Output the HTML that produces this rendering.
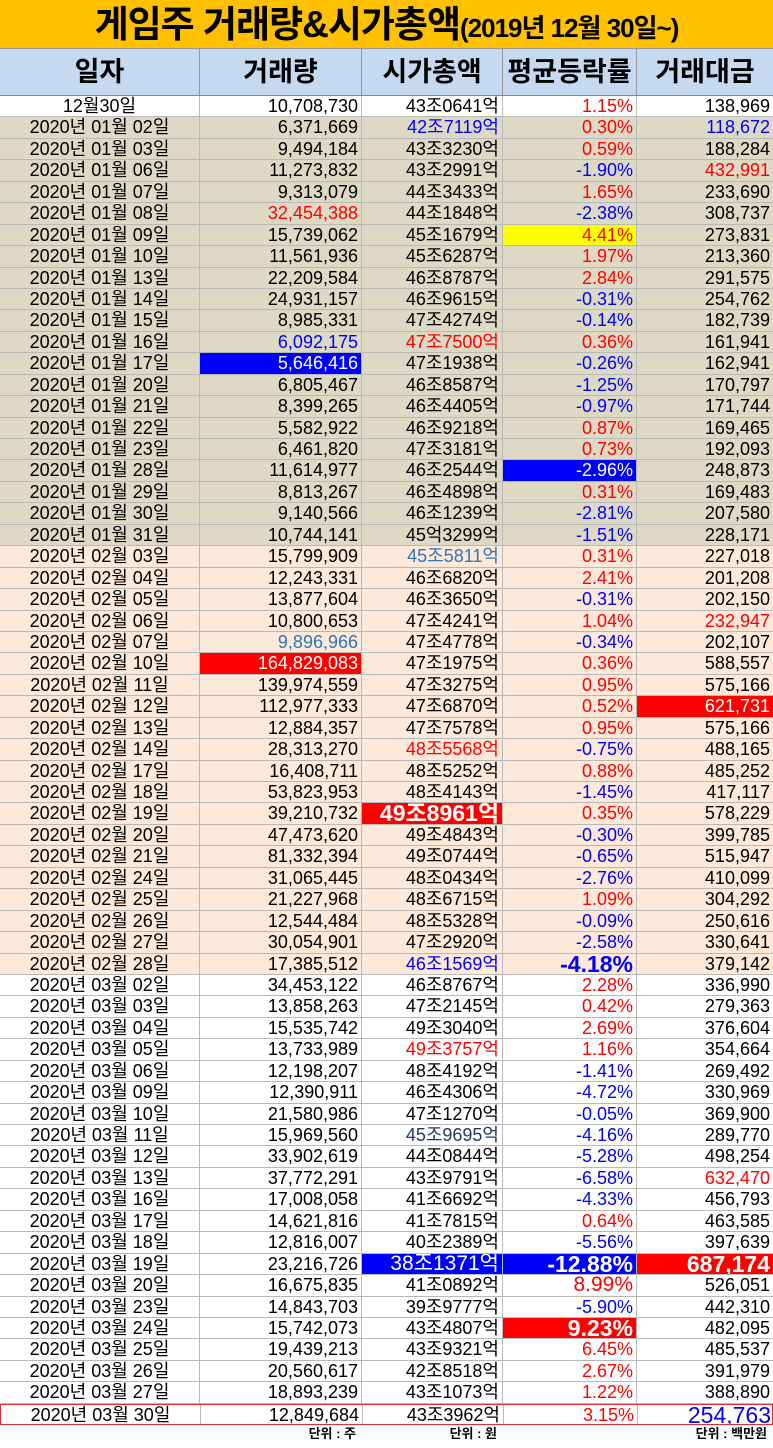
<!DOCTYPE html>
<html><head><meta charset="utf-8"><style>
*{margin:0;padding:0;box-sizing:border-box}
body{width:773px;height:1448px;background:#fff;overflow:hidden;font-family:"Liberation Sans Narrow","Liberation Sans","Noto Sans CJK KR",sans-serif;color:#000}
.title{height:49px;background:#FFC000;text-align:center;font-weight:bold;font-size:37px;line-height:49px;border-bottom:1px solid #999;letter-spacing:-1px;white-space:nowrap}
.title small{font-size:26px;font-weight:bold}
.hd{display:grid;grid-template-columns:200px 162px 141px 134px 136px;height:47px;background:#C5D9F1;border-bottom:1px solid #888}
.hd div{border-right:1px solid #999;text-align:center;font-size:27px;font-weight:bold;line-height:46px}
.hd div:last-child{border-right:none}
.row{display:grid;grid-template-columns:200px 162px 141px 134px 136px;height:21.45px;border-bottom:1px solid #b8b8b8;font-size:18px;line-height:20.5px}
.row div{border-right:1px solid #b8b8b8;text-align:right;padding-right:3px;white-space:nowrap;overflow:hidden}
.row div:first-child{text-align:center;padding:0}
.row div:last-child{border-right:none}
.j{background:#DDD9C4}.f{background:#FDE9D9}
.r{color:#f00}.b{color:#00f}.sb{color:#2E75B6}.db{color:#203864}
.rb{background:#f00;color:#fff}.bb{background:#00f;color:#fff}.yb{background:#ff0;color:#f00}
.L{font-size:23px;font-weight:bold}
.last{border:1px solid #e03030}
.ft{display:grid;grid-template-columns:200px 162px 141px 134px 136px;font-size:13px;font-weight:bold;line-height:18px}
.ft div{text-align:right;padding-right:6px}
</style></head><body>
<div class="title">게임주 거래량&amp;시가총액<small>(2019년 12월 30일~)</small></div>
<div class="hd"><div>일자</div><div>거래량</div><div>시가총액</div><div>평균등락률</div><div>거래대금</div></div>
<div class="row"><div>12월30일</div><div>10,708,730</div><div>43조0641억</div><div class="r">1.15%</div><div>138,969</div></div>
<div class="row j"><div>2020년 01월 02일</div><div>6,371,669</div><div class="b">42조7119억</div><div class="r">0.30%</div><div class="b">118,672</div></div>
<div class="row j"><div>2020년 01월 03일</div><div>9,494,184</div><div>43조3230억</div><div class="r">0.59%</div><div>188,284</div></div>
<div class="row j"><div>2020년 01월 06일</div><div>11,273,832</div><div>43조2991억</div><div class="b">-1.90%</div><div class="r">432,991</div></div>
<div class="row j"><div>2020년 01월 07일</div><div>9,313,079</div><div>44조3433억</div><div class="r">1.65%</div><div>233,690</div></div>
<div class="row j"><div>2020년 01월 08일</div><div class="r">32,454,388</div><div>44조1848억</div><div class="b">-2.38%</div><div>308,737</div></div>
<div class="row j"><div>2020년 01월 09일</div><div>15,739,062</div><div>45조1679억</div><div class="yb">4.41%</div><div>273,831</div></div>
<div class="row j"><div>2020년 01월 10일</div><div>11,561,936</div><div>45조6287억</div><div class="r">1.97%</div><div>213,360</div></div>
<div class="row j"><div>2020년 01월 13일</div><div>22,209,584</div><div>46조8787억</div><div class="r">2.84%</div><div>291,575</div></div>
<div class="row j"><div>2020년 01월 14일</div><div>24,931,157</div><div>46조9615억</div><div class="b">-0.31%</div><div>254,762</div></div>
<div class="row j"><div>2020년 01월 15일</div><div>8,985,331</div><div>47조4274억</div><div class="b">-0.14%</div><div>182,739</div></div>
<div class="row j"><div>2020년 01월 16일</div><div class="b">6,092,175</div><div class="r">47조7500억</div><div class="r">0.36%</div><div>161,941</div></div>
<div class="row j"><div>2020년 01월 17일</div><div class="bb">5,646,416</div><div>47조1938억</div><div class="b">-0.26%</div><div>162,941</div></div>
<div class="row j"><div>2020년 01월 20일</div><div>6,805,467</div><div>46조8587억</div><div class="b">-1.25%</div><div>170,797</div></div>
<div class="row j"><div>2020년 01월 21일</div><div>8,399,265</div><div>46조4405억</div><div class="b">-0.97%</div><div>171,744</div></div>
<div class="row j"><div>2020년 01월 22일</div><div>5,582,922</div><div>46조9218억</div><div class="r">0.87%</div><div>169,465</div></div>
<div class="row j"><div>2020년 01월 23일</div><div>6,461,820</div><div>47조3181억</div><div class="r">0.73%</div><div>192,093</div></div>
<div class="row j"><div>2020년 01월 28일</div><div>11,614,977</div><div>46조2544억</div><div class="bb">-2.96%</div><div>248,873</div></div>
<div class="row j"><div>2020년 01월 29일</div><div>8,813,267</div><div>46조4898억</div><div class="r">0.31%</div><div>169,483</div></div>
<div class="row j"><div>2020년 01월 30일</div><div>9,140,566</div><div>46조1239억</div><div class="b">-2.81%</div><div>207,580</div></div>
<div class="row j"><div>2020년 01월 31일</div><div>10,744,141</div><div>45억3299억</div><div class="b">-1.51%</div><div>228,171</div></div>
<div class="row f"><div>2020년 02월 03일</div><div>15,799,909</div><div class="sb">45조5811억</div><div class="r">0.31%</div><div>227,018</div></div>
<div class="row f"><div>2020년 02월 04일</div><div>12,243,331</div><div>46조6820억</div><div class="r">2.41%</div><div>201,208</div></div>
<div class="row f"><div>2020년 02월 05일</div><div>13,877,604</div><div>46조3650억</div><div class="b">-0.31%</div><div>202,150</div></div>
<div class="row f"><div>2020년 02월 06일</div><div>10,800,653</div><div>47조4241억</div><div class="r">1.04%</div><div class="r">232,947</div></div>
<div class="row f"><div>2020년 02월 07일</div><div class="sb">9,896,966</div><div>47조4778억</div><div class="b">-0.34%</div><div>202,107</div></div>
<div class="row f"><div>2020년 02월 10일</div><div class="rb">164,829,083</div><div>47조1975억</div><div class="r">0.36%</div><div>588,557</div></div>
<div class="row f"><div>2020년 02월 11일</div><div>139,974,559</div><div>47조3275억</div><div class="r">0.95%</div><div>575,166</div></div>
<div class="row f"><div>2020년 02월 12일</div><div>112,977,333</div><div>47조6870억</div><div class="r">0.52%</div><div class="rb">621,731</div></div>
<div class="row f"><div>2020년 02월 13일</div><div>12,884,357</div><div>47조7578억</div><div class="r">0.95%</div><div>575,166</div></div>
<div class="row f"><div>2020년 02월 14일</div><div>28,313,270</div><div class="r">48조5568억</div><div class="b">-0.75%</div><div>488,165</div></div>
<div class="row f"><div>2020년 02월 17일</div><div>16,408,711</div><div>48조5252억</div><div class="r">0.88%</div><div>485,252</div></div>
<div class="row f"><div>2020년 02월 18일</div><div>53,823,953</div><div>48조4143억</div><div class="b">-1.45%</div><div>417,117</div></div>
<div class="row f"><div>2020년 02월 19일</div><div>39,210,732</div><div class="rb L">49조8961억</div><div class="r">0.35%</div><div>578,229</div></div>
<div class="row f"><div>2020년 02월 20일</div><div>47,473,620</div><div>49조4843억</div><div class="b">-0.30%</div><div>399,785</div></div>
<div class="row f"><div>2020년 02월 21일</div><div>81,332,394</div><div>49조0744억</div><div class="b">-0.65%</div><div>515,947</div></div>
<div class="row f"><div>2020년 02월 24일</div><div>31,065,445</div><div>48조0434억</div><div class="b">-2.76%</div><div>410,099</div></div>
<div class="row f"><div>2020년 02월 25일</div><div>21,227,968</div><div>48조6715억</div><div class="r">1.09%</div><div>304,292</div></div>
<div class="row f"><div>2020년 02월 26일</div><div>12,544,484</div><div>48조5328억</div><div class="b">-0.09%</div><div>250,616</div></div>
<div class="row f"><div>2020년 02월 27일</div><div>30,054,901</div><div>47조2920억</div><div class="b">-2.58%</div><div>330,641</div></div>
<div class="row f"><div>2020년 02월 28일</div><div>17,385,512</div><div class="b">46조1569억</div><div class="b L">-4.18%</div><div>379,142</div></div>
<div class="row"><div>2020년 03월 02일</div><div>34,453,122</div><div>46조8767억</div><div class="r">2.28%</div><div>336,990</div></div>
<div class="row"><div>2020년 03월 03일</div><div>13,858,263</div><div>47조2145억</div><div class="r">0.42%</div><div>279,363</div></div>
<div class="row"><div>2020년 03월 04일</div><div>15,535,742</div><div>49조3040억</div><div class="r">2.69%</div><div>376,604</div></div>
<div class="row"><div>2020년 03월 05일</div><div>13,733,989</div><div class="r">49조3757억</div><div class="r">1.16%</div><div>354,664</div></div>
<div class="row"><div>2020년 03월 06일</div><div>12,198,207</div><div>48조4192억</div><div class="b">-1.41%</div><div>269,492</div></div>
<div class="row"><div>2020년 03월 09일</div><div>12,390,911</div><div>46조4306억</div><div class="b">-4.72%</div><div>330,969</div></div>
<div class="row"><div>2020년 03월 10일</div><div>21,580,986</div><div>47조1270억</div><div class="b">-0.05%</div><div>369,900</div></div>
<div class="row"><div>2020년 03월 11일</div><div>15,969,560</div><div class="db">45조9695억</div><div class="b">-4.16%</div><div>289,770</div></div>
<div class="row"><div>2020년 03월 12일</div><div>33,902,619</div><div>44조0844억</div><div class="b">-5.28%</div><div>498,254</div></div>
<div class="row"><div>2020년 03월 13일</div><div>37,772,291</div><div>43조9791억</div><div class="b">-6.58%</div><div class="r">632,470</div></div>
<div class="row"><div>2020년 03월 16일</div><div>17,008,058</div><div>41조6692억</div><div class="b">-4.33%</div><div>456,793</div></div>
<div class="row"><div>2020년 03월 17일</div><div>14,621,816</div><div>41조7815억</div><div class="r">0.64%</div><div>463,585</div></div>
<div class="row"><div>2020년 03월 18일</div><div>12,816,007</div><div>40조2389억</div><div class="b">-5.56%</div><div>397,639</div></div>
<div class="row"><div>2020년 03월 19일</div><div>23,216,726</div><div class="bb" style="font-size:21px">38조1371억</div><div class="bb L">-12.88%</div><div class="rb L">687,174</div></div>
<div class="row"><div>2020년 03월 20일</div><div>16,675,835</div><div>41조0892억</div><div class="r" style="font-size:21px">8.99%</div><div>526,051</div></div>
<div class="row"><div>2020년 03월 23일</div><div>14,843,703</div><div>39조9777억</div><div class="b">-5.90%</div><div>442,310</div></div>
<div class="row"><div>2020년 03월 24일</div><div>15,742,073</div><div>43조4807억</div><div class="rb L">9.23%</div><div>482,095</div></div>
<div class="row"><div>2020년 03월 25일</div><div>19,439,213</div><div>43조9321억</div><div class="r">6.45%</div><div>485,537</div></div>
<div class="row"><div>2020년 03월 26일</div><div>20,560,617</div><div>42조8518억</div><div class="r">2.67%</div><div>391,979</div></div>
<div class="row"><div>2020년 03월 27일</div><div>18,893,239</div><div>43조1073억</div><div class="r">1.22%</div><div>388,890</div></div>
<div class="row last"><div>2020년 03월 30일</div><div>12,849,684</div><div>43조3962억</div><div class="r">3.15%</div><div class="b L" style="font-weight:normal">254,763</div></div>
<div class="ft"><div></div><div>단위 : 주</div><div>단위 : 원</div><div></div><div>단위 : 백만원</div></div>
</body></html>
